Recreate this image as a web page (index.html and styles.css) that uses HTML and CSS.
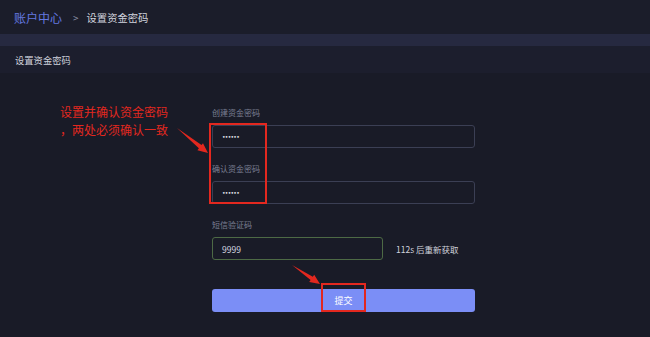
FILE: index.html
```html
<!DOCTYPE html>
<html lang="zh-CN">
<head>
<meta charset="utf-8">
<title>设置资金密码</title>
<link rel="stylesheet" href="styles.css">
</head>
<body>
<div class="page">
  <header class="topbar">
    <a class="crumb-home">账户中心</a>
    <span class="crumb-sep">&gt;</span>
    <span class="crumb-current">设置资金密码</span>
  </header>
  <div class="band"></div>
  <div class="panel-title">设置资金密码</div>
  <main class="main">
    <form class="form">
      <label class="label">创建资金密码</label>
      <div class="input"><span class="dots">••••••</span></div>
      <label class="label gap">确认资金密码</label>
      <div class="input"><span class="dots">••••••</span></div>
      <label class="label gap">短信验证码</label>
      <div class="code-row">
        <div class="input code">9999</div>
        <span class="resend">112s 后重新获取</span>
      </div>
      <button type="button" class="submit">提交</button>
    </form>
  </main>

  <div class="note">设置并确认资金密码<br>，两处必须确认一致</div>
  <div class="mark mark-inputs"></div>
  <div class="mark mark-submit"></div>
  <svg class="arrows" width="650" height="337" viewBox="0 0 650 337">
    <polygon points="177,128 201.5,145.1 203,143.2 208,153 197.4,150.2 198.9,148.3" fill="#e3281f"/>
    <polygon points="292,265 312.8,276.7 314.2,274.7 320,284 309.2,282.1 310.6,280.1" fill="#e3281f"/>
  </svg>
</div>
</body>
</html>
```
FILE: styles.css
```css
* { box-sizing: border-box; }
html, body { margin: 0; padding: 0; }
body {
  background: #191b27;
  font-family: "Noto Sans CJK SC", "Noto Sans", sans-serif;
  color: #c8cad6;
}
.page {
  position: relative;
  width: 650px;
  height: 337px;
  overflow: hidden;
}
.topbar {
  height: 34px;
  background: #1b1d2a;
  display: flex;
  align-items: center;
  padding-left: 14px;
}
.crumb-home {
  color: #6479e0;
  font-size: 12px;
}
.crumb-sep {
  color: #8a8fa5;
  font-size: 10px;
  margin: 0 8px 0 11px;
}
.crumb-current {
  color: #d2d4de;
  font-size: 10.3px;
}
.band {
  height: 12px;
  background: #262940;
}
.panel-title {
  height: 27px;
  background: #1c1e2d;
  display: flex;
  align-items: center;
  padding-left: 15px;
  font-size: 9.3px;
  color: #d0d2dc;
}
.main {
  padding: 34px 0 0 212px;
}
.form {
  width: 263px;
  display: flex;
  flex-direction: column;
}
.label {
  font-size: 8px;
  line-height: 12px;
  height: 12px;
  color: #7c8094;
  margin-bottom: 6px;
}
.label.gap { margin-top: 15px; }
.input {
  height: 23px;
  border: 1px solid #3b3f54;
  border-radius: 3px;
  background: #191b27;
  display: flex;
  align-items: center;
  padding-left: 9px;
  color: #e4e6ee;
}
.dots {
  font-family: "DejaVu Sans", sans-serif;
  font-size: 6px;
  letter-spacing: -0.7px;
  line-height: 1;
}
.code-row {
  display: flex;
  align-items: center;
}
.input.code {
  width: 171px;
  border-color: #4d6a45;
  font-size: 8.5px;
  color: #d6d8e0;
}
.resend {
  margin-left: 13px;
  font-size: 8.5px;
  color: #d0d2dc;
}
.submit {
  margin-top: 29px;
  height: 23px;
  border: 0;
  border-radius: 3px;
  background: #7b8ef6;
  color: #ffffff;
  font-family: inherit;
  font-size: 9px;
  padding: 0;
}
.note {
  position: absolute;
  left: 60px;
  top: 103px;
  font-size: 12px;
  line-height: 18px;
  color: #e3281f;
}
.mark {
  position: absolute;
  border: 2px solid #e3281f;
}
.mark-inputs {
  left: 209px;
  top: 123px;
  width: 58px;
  height: 81px;
}
.mark-submit {
  left: 321px;
  top: 283px;
  width: 45px;
  height: 29px;
}
.arrows {
  position: absolute;
  left: 0;
  top: 0;
  pointer-events: none;
}
```
